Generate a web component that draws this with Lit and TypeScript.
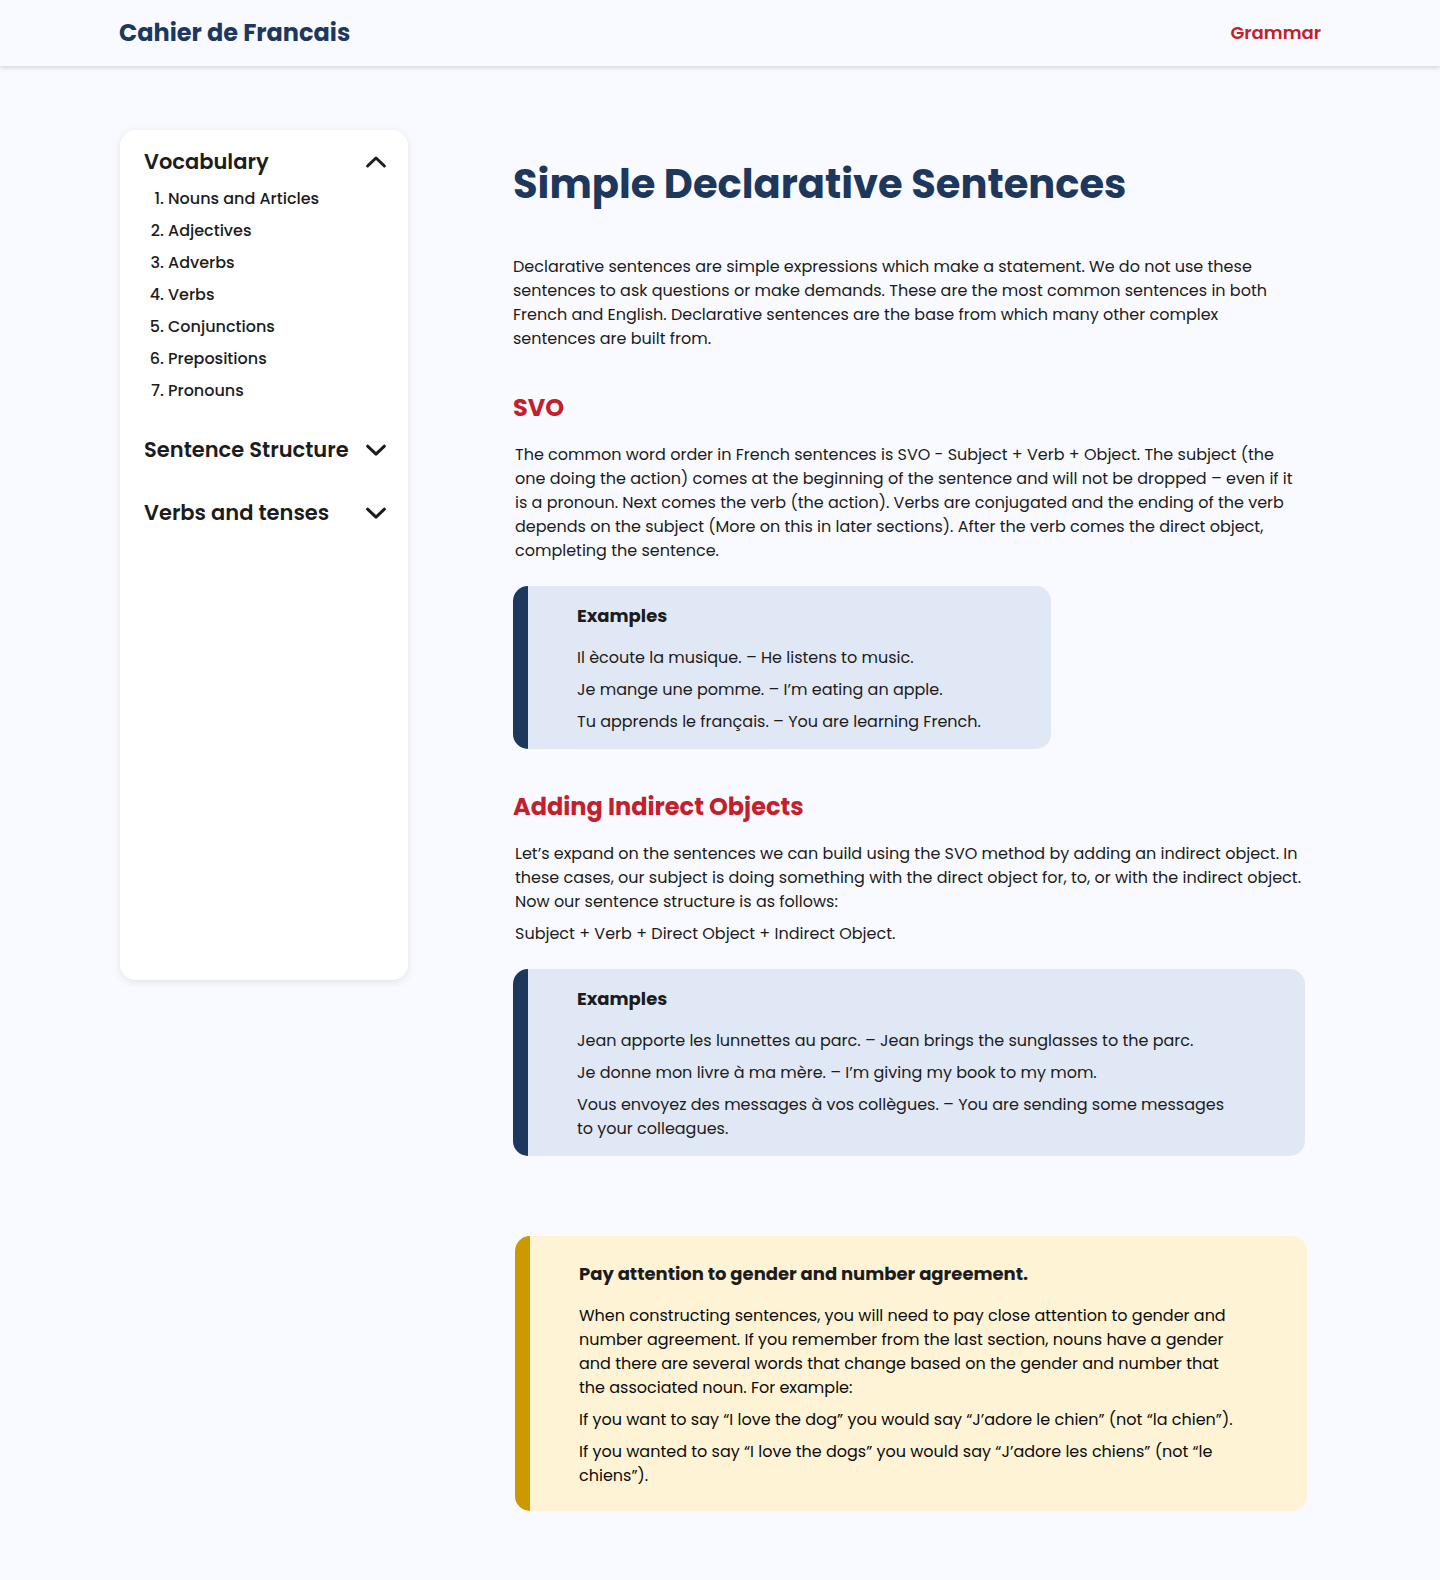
import { LitElement, html, css } from "lit";
import { customElement, property, state } from "lit/decorators.js";

interface Topic {
  title: string;
  lessons: string[];
}

const TOPICS: Topic[] = [
  {
    title: "Vocabulary",
    lessons: [
      "Nouns and Articles",
      "Adjectives",
      "Adverbs",
      "Verbs",
      "Conjunctions",
      "Prepositions",
      "Pronouns",
    ],
  },
  { title: "Sentence Structure", lessons: [] },
  { title: "Verbs and tenses", lessons: [] },
];

@customElement("site-header")
export class SiteHeader extends LitElement {
  static styles = css`
    :host {
      display: block;
    }
    .bar {
      background: #f9faff;
      box-shadow: 0 2px 5px rgba(0, 0, 0, 0.15);
    }
    .inner {
      box-sizing: border-box;
      max-width: 1202px;
      min-height: 66px;
      margin: 0 auto;
      display: flex;
      align-items: center;
      justify-content: space-between;
      line-height: 36px;
    }
    .brand,
    .link {
      display: block;
      text-decoration: none;
    }
    .brand {
      font-size: 24px;
      font-weight: 700;
      color: #1e385d;
    }
    .link {
      font-size: 18px;
      font-weight: 600;
      color: #c4202b;
    }
  `;

  render() {
    return html`
      <header class="bar">
        <div class="inner">
          <a class="brand" href="#">Cahier de Francais</a>
          <nav><a class="link" href="#grammar">Grammar</a></nav>
        </div>
      </header>
    `;
  }
}

@customElement("topic-menu")
export class TopicMenu extends LitElement {
  static styles = css`
    :host {
      display: block;
    }
    .card {
      box-sizing: border-box;
      min-height: 850px;
      padding: 16px 20px 16px 24px;
      display: flex;
      flex-direction: column;
      gap: 31px;
      background: #fff;
      border-radius: 16px;
      box-shadow: 0 2px 10px rgba(0, 0, 0, 0.09);
    }
    .title {
      margin: 0;
      font: inherit;
    }
    .toggle {
      width: 100%;
      padding: 0;
      border: 0;
      background: none;
      display: flex;
      align-items: center;
      justify-content: space-between;
      font: inherit;
      font-size: 21px;
      font-weight: 600;
      line-height: 32px;
      color: #1c1c1c;
      text-align: left;
      white-space: nowrap;
      cursor: pointer;
    }
    .chevron {
      flex: none;
      width: 24px;
      height: 24px;
      fill: none;
      stroke: #1c1c1c;
      stroke-width: 3;
      stroke-linecap: round;
      stroke-linejoin: round;
    }
    .lessons {
      margin: 9px 0 0;
      padding: 0 0 0 24px;
      display: flex;
      flex-direction: column;
      gap: 8px;
      font-weight: 500;
      line-height: 24px;
      color: #1c1c1c;
    }
    .lesson {
      color: inherit;
      text-decoration: none;
    }
  `;

  @state() private open = "Vocabulary";

  private toggle(title: string) {
    this.open = this.open === title ? "" : title;
  }

  render() {
    return html`
      <nav class="card">
        ${TOPICS.map((topic) => {
          const open = this.open === topic.title;
          return html`
            <section>
              <h2 class="title">
                <button
                  class="toggle"
                  type="button"
                  aria-expanded=${open ? "true" : "false"}
                  @click=${() => this.toggle(topic.title)}
                >
                  ${topic.title}
                  <svg class="chevron" viewBox="0 0 24 24" aria-hidden="true">
                    <path d=${open ? "M3.6 16 12 8 20.4 16" : "M3.6 8.2 12 16.2 20.4 8.2"} />
                  </svg>
                </button>
              </h2>
              ${open && topic.lessons.length
                ? html`<ol class="lessons">
                    ${topic.lessons.map(
                      (lesson) => html`<li><a class="lesson" href="#">${lesson}</a></li>`
                    )}
                  </ol>`
                : null}
            </section>
          `;
        })}
      </nav>
    `;
  }
}

@customElement("call-out")
export class CallOut extends LitElement {
  static styles = css`
    :host {
      display: block;
    }
    .box {
      box-sizing: border-box;
      max-width: 792px;
      padding: 16px 64px 15px 49px;
      border-left: 15px solid #1e385d;
      border-radius: 15px;
      background: #e1e8f5;
      color: #1c1c1c;
    }
    .short {
      max-width: 538px;
    }
    .warning {
      padding-top: 24px;
      padding-bottom: 23px;
      border-left-color: #cc9a00;
      background: #fff3d6;
      color: #0c0c0c;
    }
    .heading {
      margin: 0 0 17px;
      font-size: 18px;
      line-height: 27px;
      font-weight: 700;
      color: #1c1c1c;
    }
    .line {
      margin: 8px 0 0;
      line-height: 24px;
    }
    .heading + .line {
      margin-top: 0;
    }
  `;

  @property() kind = "example";
  @property() heading = "";
  @property({ attribute: false }) lines: string[] = [];

  render() {
    return html`
      <aside class="box ${this.kind}">
        <h3 class="heading">${this.heading}</h3>
        ${this.lines.map((line) => html`<p class="line">${line}</p>`)}
      </aside>
    `;
  }
}

@customElement("app-root")
export class AppRoot extends LitElement {
  static styles = css`
    :host {
      display: block;
      min-height: 100vh;
      background: #f9faff;
      color: #1c1c1c;
      font-family: Poppins, Inter, "Open Sans", sans-serif;
      font-size: 16px;
      line-height: 24px;
    }
    .page {
      box-sizing: border-box;
      max-width: 1200px;
      margin: 0 auto;
      padding: 64px 0;
      display: grid;
      grid-template-columns: 288px minmax(0, 1fr);
      column-gap: 105px;
      align-items: start;
    }
    .article {
      padding-top: 24px;
    }
    .title {
      margin: 0 0 41px;
      font-size: 40px;
      line-height: 60px;
      font-weight: 700;
      color: #1e385d;
    }
    .intro {
      max-width: 768px;
      margin: 0 0 39px;
    }
    .section {
      margin-bottom: 40px;
    }
    .subtitle {
      margin: 0 0 17px;
      font-size: 24px;
      line-height: 36px;
      font-weight: 700;
      color: #c4202b;
    }
    .body {
      max-width: 788px;
      margin-bottom: 23px;
      padding-left: 2px;
    }
    .text {
      margin: 0;
    }
    .text + .text {
      margin-top: 8px;
    }
    .notice {
      padding: 40px 0 0 2px;
    }
  `;

  render() {
    return html`
      <site-header></site-header>
      <div class="page">
        <topic-menu></topic-menu>
        <main class="article">
          <h1 class="title">Simple Declarative Sentences</h1>
          <p class="intro">
            Declarative sentences are simple expressions which make a statement. We do not use these
            sentences to ask questions or make demands. These are the most common sentences in both
            French and English. Declarative sentences are the base from which many other complex
            sentences are built from.
          </p>
          <section class="section">
            <h2 class="subtitle">SVO</h2>
            <div class="body">
              <p class="text">
                The common word order in French sentences is SVO - Subject + Verb + Object. The
                subject (the one doing the action) comes at the beginning of the sentence and will
                not be dropped – even if it is a pronoun. Next comes the verb (the action). Verbs
                are conjugated and the ending of the verb depends on the subject (More on this in
                later sections). After the verb comes the direct object, completing the sentence.
              </p>
            </div>
            <call-out
              kind="short"
              heading="Examples"
              .lines=${[
                "Il ècoute la musique. – He listens to music.",
                "Je mange une pomme. – I’m eating an apple.",
                "Tu apprends le français. – You are learning French.",
              ]}
            ></call-out>
          </section>
          <section class="section">
            <h2 class="subtitle">Adding Indirect Objects</h2>
            <div class="body">
              <p class="text">
                Let’s expand on the sentences we can build using the SVO method by adding an
                indirect object. In these cases, our subject is doing something with the direct
                object for, to, or with the indirect object. Now our sentence structure is as
                follows:
              </p>
              <p class="text">Subject + Verb + Direct Object + Indirect Object.</p>
            </div>
            <call-out
              heading="Examples"
              .lines=${[
                "Jean apporte les lunnettes au parc. – Jean brings the sunglasses to the parc.",
                "Je donne mon livre à ma mère. – I’m giving my book to my mom.",
                "Vous envoyez des messages à vos collègues. – You are sending some messages to your colleagues.",
              ]}
            ></call-out>
          </section>
          <div class="notice">
            <call-out
              kind="warning"
              heading="Pay attention to gender and number agreement."
              .lines=${[
                "When constructing sentences, you will need to pay close attention to gender and number agreement. If you remember from the last section, nouns have a gender and there are several words that change based on the gender and number that the associated noun. For example:",
                "If you want to say “I love the dog” you would say “J’adore le chien” (not “la chien”).",
                "If you wanted to say “I love the dogs” you would say “J’adore les chiens” (not “le chiens”).",
              ]}
            ></call-out>
          </div>
        </main>
      </div>
    `;
  }
}
